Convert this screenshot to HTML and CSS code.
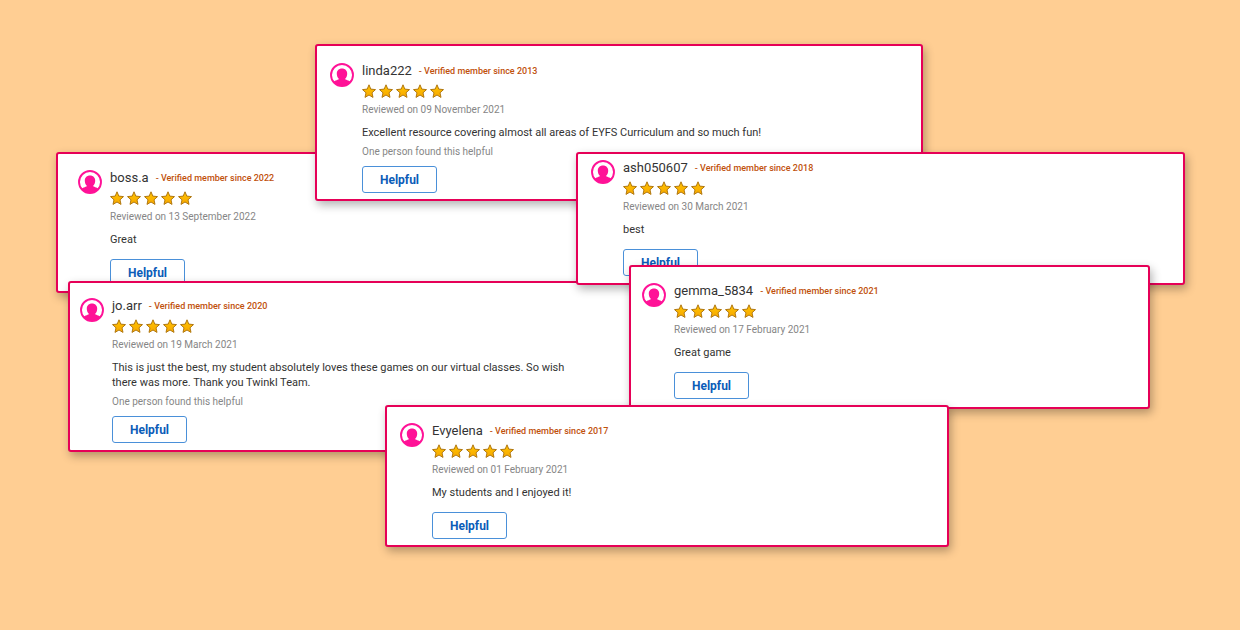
FILE: index.html
```
<!DOCTYPE html>
<html lang="en">
<head>
<meta charset="utf-8">
<meta name="viewport" content="width=device-width, initial-scale=1">
<title>Member reviews</title>
<link rel="stylesheet" href="styles.css">
</head>
<body>
<svg class="sprite" aria-hidden="true">
  <defs>
    <linearGradient id="gold" x1="0" y1="0" x2="0" y2="1">
      <stop offset="0" stop-color="#ffc400"/>
      <stop offset="1" stop-color="#f8a800"/>
    </linearGradient>
    <clipPath id="disc"><circle cx="12" cy="12" r="11"/></clipPath>
    <symbol id="avatar" viewBox="0 0 24 24">
      <circle cx="12" cy="12" r="11" fill="#fff"/>
      <g clip-path="url(#disc)" fill="#ff1297">
        <path d="M12 5.500c-3.200 0-5.200 2.200-5.200 5.200 0 2.300.8 4 2.200 5.200-.4.900-3.500 1-6.500 3.600V24h19v-4.500c-3-2.600-6.100-2.700-6.500-3.600 1.400-1.200 2.200-2.900 2.200-5.200 0-3-2-5.200-5.200-5.200z"/>
      </g>
      <circle cx="12" cy="12" r="11" fill="none" stroke="#ff1297" stroke-width="1.900"/>
    </symbol>
    <symbol id="star" viewBox="0 0 14 14">
      <path d="M7 .8l1.800 4.300 4.700.5-3.500 3.200 1 4.600L7 11l-4 2.400 1-4.600L.5 5.600l4.700-.5z" fill="url(#gold)" stroke="#b07812" stroke-width="1" stroke-linejoin="round"/>
    </symbol>
    <symbol id="stars" viewBox="0 0 82 14">
      <use href="#star" x="0" width="14" height="14"/>
      <use href="#star" x="17" width="14" height="14"/>
      <use href="#star" x="34" width="14" height="14"/>
      <use href="#star" x="51" width="14" height="14"/>
      <use href="#star" x="68" width="14" height="14"/>
    </symbol>
  </defs>
</svg>
<main class="board">
  <article class="card card-boss">
    <svg class="avatar" aria-hidden="true"><use href="#avatar"/></svg>
    <div class="review">
      <header class="member"><h2 class="name">boss.a</h2><span class="since">- Verified member since 2022</span></header>
      <svg class="stars" role="img" aria-label="5 out of 5 stars"><use href="#stars"/></svg>
      <p class="date">Reviewed on 13 September 2022</p>
      <p class="comment">Great</p>
      <button class="helpful" type="button">Helpful</button>
    </div>
  </article>
  <article class="card card-linda">
    <svg class="avatar" aria-hidden="true"><use href="#avatar"/></svg>
    <div class="review">
      <header class="member"><h2 class="name">linda222</h2><span class="since">- Verified member since 2013</span></header>
      <svg class="stars" role="img" aria-label="5 out of 5 stars"><use href="#stars"/></svg>
      <p class="date">Reviewed on 09 November 2021</p>
      <p class="comment">Excellent resource covering almost all areas of EYFS Curriculum and so much fun!</p>
      <p class="found">One person found this helpful</p>
      <button class="helpful" type="button">Helpful</button>
    </div>
  </article>
  <article class="card card-jo">
    <svg class="avatar" aria-hidden="true"><use href="#avatar"/></svg>
    <div class="review">
      <header class="member"><h2 class="name">jo.arr</h2><span class="since">- Verified member since 2020</span></header>
      <svg class="stars" role="img" aria-label="5 out of 5 stars"><use href="#stars"/></svg>
      <p class="date">Reviewed on 19 March 2021</p>
      <p class="comment">This is just the best, my student absolutely loves these games on our virtual classes. So wish there was more. Thank you Twinkl Team.</p>
      <p class="found">One person found this helpful</p>
      <button class="helpful" type="button">Helpful</button>
    </div>
  </article>
  <article class="card card-ash">
    <svg class="avatar" aria-hidden="true"><use href="#avatar"/></svg>
    <div class="review">
      <header class="member"><h2 class="name">ash050607</h2><span class="since">- Verified member since 2018</span></header>
      <svg class="stars" role="img" aria-label="5 out of 5 stars"><use href="#stars"/></svg>
      <p class="date">Reviewed on 30 March 2021</p>
      <p class="comment">best</p>
      <button class="helpful" type="button">Helpful</button>
    </div>
  </article>
  <article class="card card-gemma">
    <svg class="avatar" aria-hidden="true"><use href="#avatar"/></svg>
    <div class="review">
      <header class="member"><h2 class="name">gemma_5834</h2><span class="since">- Verified member since 2021</span></header>
      <svg class="stars" role="img" aria-label="5 out of 5 stars"><use href="#stars"/></svg>
      <p class="date">Reviewed on 17 February 2021</p>
      <p class="comment">Great game</p>
      <button class="helpful" type="button">Helpful</button>
    </div>
  </article>
  <article class="card card-evyelena">
    <svg class="avatar" aria-hidden="true"><use href="#avatar"/></svg>
    <div class="review">
      <header class="member"><h2 class="name">Evyelena</h2><span class="since">- Verified member since 2017</span></header>
      <svg class="stars" role="img" aria-label="5 out of 5 stars"><use href="#stars"/></svg>
      <p class="date">Reviewed on 01 February 2021</p>
      <p class="comment">My students and I enjoyed it!</p>
      <button class="helpful" type="button">Helpful</button>
    </div>
  </article>
</main>
</body>
</html>
```

FILE: styles.css
```
* { box-sizing: border-box; }

body {
  margin: 0;
  background: #ffce93;
  font-family: Roboto, "Liberation Sans", sans-serif;
  color: #333;
}

.sprite { position: absolute; width: 0; height: 0; }

.board { position: relative; min-height: 100vh; }

/* Overlapping cards scattered over the board, later ones on top */
.card {
  position: absolute;
  display: flex;
  align-items: flex-start;
  gap: 8px;
  padding: 15px 13px 6px;
  background: #fff;
  border: 2px solid #e60057;
  border-radius: 3px;
  box-shadow: 2px 4px 10px rgba(0, 0, 0, 0.3);
}
.card-boss { top: 152px; left: 56px; right: 576px; padding: 14px 20px 5px; }
.card-linda { top: 44px; left: 315px; right: 317px; }
.card-jo { top: 281px; left: 68px; right: 564px; padding: 13px 10px 7px; }
.card-ash { top: 152px; left: 576px; right: 55px; padding: 4px 13px 7px; }
.card-gemma { top: 265px; left: 629px; right: 90px; padding: 14px 11px 8px; }
.card-evyelena { top: 405px; left: 385px; right: 291px; padding: 14px 13px 6px; }

.avatar { flex: none; width: 24px; height: 24px; margin-top: 2px; }

.review { display: flex; flex-direction: column; align-items: flex-start; }

.member { display: flex; align-items: center; gap: 7px; height: 20px; }
.name { margin: 0; font-size: 13px; line-height: 20px; font-weight: 400; }
.since { font-size: 9px; line-height: 20px; font-weight: 500; color: #bf510c; }

.stars { width: 82px; height: 14px; margin: 3px 0; }

.date, .comment, .found { margin: 0; }
.date { font-size: 10px; line-height: 18px; color: #868686; }
.comment { margin-top: 6px; max-width: 465px; font-size: 11px; line-height: 15px; }
.found { margin-top: 4px; font-size: 10px; line-height: 15px; color: #868686; }

.helpful {
  width: 75px;
  height: 27px;
  margin-top: 12px;
  padding: 0;
  border: 1px solid #4a90d9;
  border-radius: 3px;
  background: #fff;
  color: #0b5cb8;
  font-family: inherit;
  font-size: 12px;
  font-weight: 700;
}
.found + .helpful { margin-top: 7px; }
```
